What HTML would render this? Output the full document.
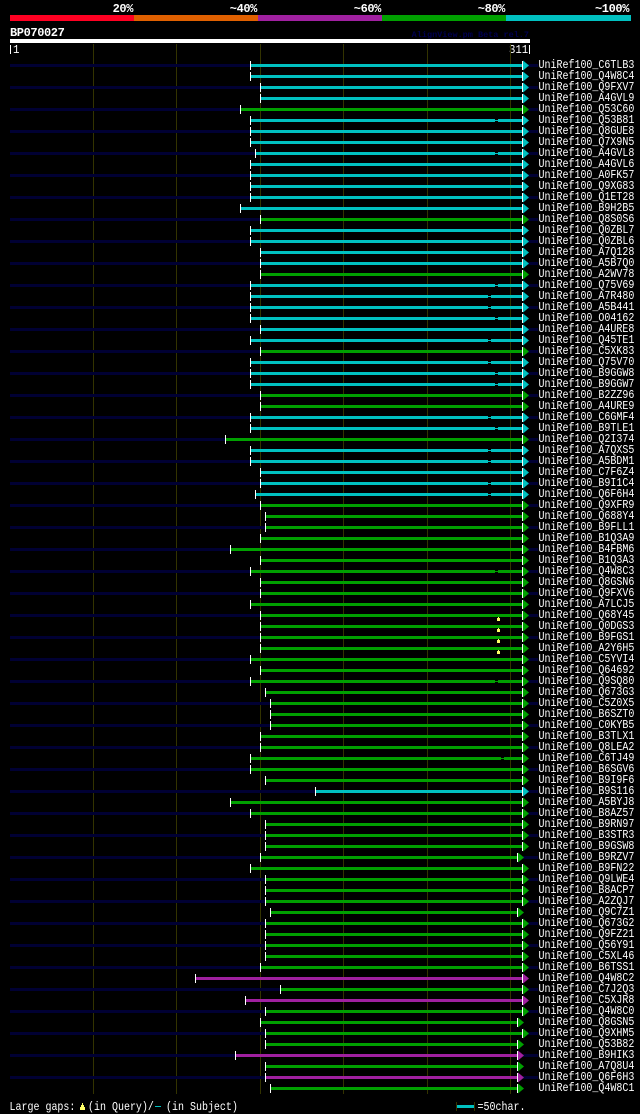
<!DOCTYPE html>
<html><head><meta charset="utf-8"><title>BP070027</title>
<style>
html,body{margin:0;padding:0;background:#000;width:640px;height:1114px;overflow:hidden}
svg{display:block}
text{fill:#fff;font-family:"Liberation Mono",monospace;font-size:12px}
.rows text{transform:translate(538.5px,0) scaleX(.833)}
.c{fill:#00c0c0}.g{fill:#00a000}.p{fill:#a020a0}
.h{font-weight:bold;letter-spacing:-.4px}
</style></head><body>
<svg xmlns="http://www.w3.org/2000/svg" width="640" height="1114" viewBox="0 0 640 1114">
<defs>
<g id="e"><path d="M523-3.5l6 5-6 5z"/><path fill="#fff" d="M522-3h1v9h-1z"/></g>
<g id="f"><path fill="#000" d="M517 0h6v3h-6z"/><path d="M518-3.5l6 5-6 5z"/><path fill="#fff" d="M517-3h1v9h-1z"/></g>
<path id="m" fill="#000033" d="M523 0h5v3h-5z"/>
<path id="g495" fill="#000" d="M495 0h3v1h-3zm0 2h3v1h-3z"/>
<path id="g488" fill="#000" d="M488 0h3v1h-3zm0 2h3v1h-3z"/>
<path id="g502" fill="#000" d="M501 0h3v1h-3zm0 2h3v1h-3z"/>
<path id="y" fill="#ffff66" d="M498 3h1v1h-1zM497 4h3v3h-3z"/>
<g id="b195"><path d="M196 0H522v3H196z"/><path fill="#fff" d="M195-3h1v9h-1z"/></g>
<g id="b225"><path d="M226 0H522v3H226z"/><path fill="#fff" d="M225-3h1v9h-1z"/></g>
<g id="b230"><path d="M231 0H522v3H231z"/><path fill="#fff" d="M230-3h1v9h-1z"/></g>
<g id="b235"><path d="M236 0H522v3H236z"/><path fill="#fff" d="M235-3h1v9h-1z"/></g>
<g id="b240"><path d="M241 0H522v3H241z"/><path fill="#fff" d="M240-3h1v9h-1z"/></g>
<g id="b245"><path d="M246 0H522v3H246z"/><path fill="#fff" d="M245-3h1v9h-1z"/></g>
<g id="b250"><path d="M251 0H522v3H251z"/><path fill="#fff" d="M250-3h1v9h-1z"/></g>
<g id="b255"><path d="M256 0H522v3H256z"/><path fill="#fff" d="M255-3h1v9h-1z"/></g>
<g id="b260"><path d="M261 0H522v3H261z"/><path fill="#fff" d="M260-3h1v9h-1z"/></g>
<g id="b265"><path d="M266 0H522v3H266z"/><path fill="#fff" d="M265-3h1v9h-1z"/></g>
<g id="b270"><path d="M271 0H522v3H271z"/><path fill="#fff" d="M270-3h1v9h-1z"/></g>
<g id="b280"><path d="M281 0H522v3H281z"/><path fill="#fff" d="M280-3h1v9h-1z"/></g>
<g id="b315"><path d="M316 0H522v3H316z"/><path fill="#fff" d="M315-3h1v9h-1z"/></g>
<path id="n225" fill="#000033" d="M10 0H225v3H10zM528 0h10v3h-10z"/>
<path id="n230" fill="#000033" d="M10 0H230v3H10zM528 0h10v3h-10z"/>
<path id="n235" fill="#000033" d="M10 0H235v3H10zM528 0h10v3h-10z"/>
<path id="n240" fill="#000033" d="M10 0H240v3H10zM528 0h10v3h-10z"/>
<path id="n250" fill="#000033" d="M10 0H250v3H10zM528 0h10v3h-10z"/>
<path id="n255" fill="#000033" d="M10 0H255v3H10zM528 0h10v3h-10z"/>
<path id="n260" fill="#000033" d="M10 0H260v3H10zM528 0h10v3h-10z"/>
<path id="n265" fill="#000033" d="M10 0H265v3H10zM528 0h10v3h-10z"/>
<path id="n270" fill="#000033" d="M10 0H270v3H10zM528 0h10v3h-10z"/>
<path id="n280" fill="#000033" d="M10 0H280v3H10zM528 0h10v3h-10z"/>
<path id="n315" fill="#000033" d="M10 0H315v3H10zM528 0h10v3h-10z"/>
</defs>

<!-- header -->
<text class="h" x="133" y="12" text-anchor="end">20%</text>
<text class="h" x="257" y="12" text-anchor="end">~40%</text>
<text class="h" x="381" y="12" text-anchor="end">~60%</text>
<text class="h" x="505" y="12" text-anchor="end">~80%</text>
<text class="h" x="629" y="12" text-anchor="end">~100%</text>
<path fill="#ff0022" d="M10 15h124v6H10z"/>
<path fill="#e06000" d="M134 15h124v6H134z"/>
<path fill="#a020a0" d="M258 15h124v6H258z"/>
<path fill="#00a000" d="M382 15h124v6H382z"/>
<path fill="#00c0c0" d="M506 15h125v6H506z"/>
<text class="h" x="10" y="36">BP070027</text>
<text x="529" y="37" text-anchor="end" style="fill:#000050;font-size:8.5px;font-weight:bold">AlignView.pm Beta rel.7</text>
<path fill="#fff" d="M10 39h520v4H10z"/>
<path fill="#fff" d="M10 45h1v9h-1zM529 45h1v9h-1z"/>
<text transform="translate(13 53) scale(.9 1)">1</text>
<text transform="translate(509 53) scale(.889 1)">311</text>

<!-- grid -->
<path fill="#333300" d="M93 44h1v1050h-1zM176 44h1v1050h-1zM260 44h1v1050h-1zM343 44h1v1050h-1zM427 44h1v1050h-1zM510 44h1v1050h-1z"/>

<g class="rows">
<g class="c" transform="translate(0,64)"><use href="#n250"/><use href="#b250"/><use href="#e"/><text y="4">UniRef100_C6TLB3</text></g>
<g class="c" transform="translate(0,75)"><use href="#b250"/><use href="#e"/><text y="4">UniRef100_Q4W8C4</text></g>
<g class="c" transform="translate(0,86)"><use href="#n260"/><use href="#b260"/><use href="#e"/><text y="4">UniRef100_Q9FXV7</text></g>
<g class="c" transform="translate(0,97)"><use href="#b260"/><use href="#e"/><text y="4">UniRef100_A4GVL9</text></g>
<g class="g" transform="translate(0,108)"><use href="#n240"/><use href="#b240"/><use href="#e"/><text y="4">UniRef100_Q53C60</text></g>
<g class="c" transform="translate(0,119)"><use href="#b250"/><use href="#g495"/><use href="#e"/><text y="4">UniRef100_Q53B81</text></g>
<g class="c" transform="translate(0,130)"><use href="#n250"/><use href="#b250"/><use href="#e"/><text y="4">UniRef100_Q8GUE8</text></g>
<g class="c" transform="translate(0,141)"><use href="#b250"/><use href="#e"/><text y="4">UniRef100_Q7X9N5</text></g>
<g class="c" transform="translate(0,152)"><use href="#n255"/><use href="#b255"/><use href="#g495"/><use href="#e"/><text y="4">UniRef100_A4GVL8</text></g>
<g class="c" transform="translate(0,163)"><use href="#b250"/><use href="#e"/><text y="4">UniRef100_A4GVL6</text></g>
<g class="c" transform="translate(0,174)"><use href="#n250"/><use href="#b250"/><use href="#e"/><text y="4">UniRef100_A0FK57</text></g>
<g class="c" transform="translate(0,185)"><use href="#b250"/><use href="#e"/><text y="4">UniRef100_Q9XG83</text></g>
<g class="c" transform="translate(0,196)"><use href="#n250"/><use href="#b250"/><use href="#e"/><text y="4">UniRef100_Q1ET28</text></g>
<g class="c" transform="translate(0,207)"><use href="#b240"/><use href="#e"/><text y="4">UniRef100_B9H2B5</text></g>
<g class="g" transform="translate(0,218)"><use href="#n260"/><use href="#b260"/><use href="#e"/><text y="4">UniRef100_Q8S0S6</text></g>
<g class="c" transform="translate(0,229)"><use href="#b250"/><use href="#e"/><text y="4">UniRef100_Q0ZBL7</text></g>
<g class="c" transform="translate(0,240)"><use href="#n250"/><use href="#b250"/><use href="#e"/><text y="4">UniRef100_Q0ZBL6</text></g>
<g class="c" transform="translate(0,251)"><use href="#b260"/><use href="#e"/><text y="4">UniRef100_A7Q128</text></g>
<g class="c" transform="translate(0,262)"><use href="#n260"/><use href="#b260"/><use href="#e"/><text y="4">UniRef100_A5B7Q0</text></g>
<g class="g" transform="translate(0,273)"><use href="#b260"/><use href="#e"/><text y="4">UniRef100_A2WV78</text></g>
<g class="c" transform="translate(0,284)"><use href="#n250"/><use href="#b250"/><use href="#g495"/><use href="#e"/><text y="4">UniRef100_Q75V69</text></g>
<g class="c" transform="translate(0,295)"><use href="#b250"/><use href="#g488"/><use href="#e"/><text y="4">UniRef100_A7R480</text></g>
<g class="c" transform="translate(0,306)"><use href="#n250"/><use href="#b250"/><use href="#g488"/><use href="#e"/><text y="4">UniRef100_A5B441</text></g>
<g class="c" transform="translate(0,317)"><use href="#b250"/><use href="#g495"/><use href="#e"/><text y="4">UniRef100_O04162</text></g>
<g class="c" transform="translate(0,328)"><use href="#n260"/><use href="#b260"/><use href="#e"/><text y="4">UniRef100_A4URE8</text></g>
<g class="c" transform="translate(0,339)"><use href="#b250"/><use href="#g488"/><use href="#e"/><text y="4">UniRef100_Q45TE1</text></g>
<g class="g" transform="translate(0,350)"><use href="#n260"/><use href="#b260"/><use href="#e"/><text y="4">UniRef100_C5XK83</text></g>
<g class="c" transform="translate(0,361)"><use href="#b250"/><use href="#g488"/><use href="#e"/><text y="4">UniRef100_Q75V70</text></g>
<g class="c" transform="translate(0,372)"><use href="#n250"/><use href="#b250"/><use href="#g495"/><use href="#e"/><text y="4">UniRef100_B9GGW8</text></g>
<g class="c" transform="translate(0,383)"><use href="#b250"/><use href="#g495"/><use href="#e"/><text y="4">UniRef100_B9GGW7</text></g>
<g class="g" transform="translate(0,394)"><use href="#n260"/><use href="#b260"/><use href="#e"/><text y="4">UniRef100_B2ZZ96</text></g>
<g class="g" transform="translate(0,405)"><use href="#b260"/><use href="#e"/><text y="4">UniRef100_A4URE9</text></g>
<g class="c" transform="translate(0,416)"><use href="#n250"/><use href="#b250"/><use href="#g488"/><use href="#e"/><text y="4">UniRef100_C6GMF4</text></g>
<g class="c" transform="translate(0,427)"><use href="#b250"/><use href="#g495"/><use href="#e"/><text y="4">UniRef100_B9TLE1</text></g>
<g class="g" transform="translate(0,438)"><use href="#n225"/><use href="#b225"/><use href="#e"/><text y="4">UniRef100_Q2I374</text></g>
<g class="c" transform="translate(0,449)"><use href="#b250"/><use href="#g488"/><use href="#e"/><text y="4">UniRef100_A7QXS5</text></g>
<g class="c" transform="translate(0,460)"><use href="#n250"/><use href="#b250"/><use href="#g488"/><use href="#e"/><text y="4">UniRef100_A5BDM1</text></g>
<g class="c" transform="translate(0,471)"><use href="#b260"/><use href="#e"/><text y="4">UniRef100_C7F6Z4</text></g>
<g class="c" transform="translate(0,482)"><use href="#n260"/><use href="#b260"/><use href="#g488"/><use href="#e"/><text y="4">UniRef100_B9I1C4</text></g>
<g class="c" transform="translate(0,493)"><use href="#b255"/><use href="#g488"/><use href="#e"/><text y="4">UniRef100_Q6F6H4</text></g>
<g class="g" transform="translate(0,504)"><use href="#n260"/><use href="#b260"/><use href="#e"/><text y="4">UniRef100_Q9XFR9</text></g>
<g class="g" transform="translate(0,515)"><use href="#b265"/><use href="#e"/><text y="4">UniRef100_Q688Y4</text></g>
<g class="g" transform="translate(0,526)"><use href="#n265"/><use href="#b265"/><use href="#e"/><text y="4">UniRef100_B9FLL1</text></g>
<g class="g" transform="translate(0,537)"><use href="#b260"/><use href="#e"/><text y="4">UniRef100_B1Q3A9</text></g>
<g class="g" transform="translate(0,548)"><use href="#n230"/><use href="#b230"/><use href="#e"/><text y="4">UniRef100_B4FBM6</text></g>
<g class="g" transform="translate(0,559)"><use href="#b260"/><use href="#e"/><text y="4">UniRef100_B1Q3A3</text></g>
<g class="g" transform="translate(0,570)"><use href="#n250"/><use href="#b250"/><use href="#g495"/><use href="#e"/><text y="4">UniRef100_Q4W8C3</text></g>
<g class="g" transform="translate(0,581)"><use href="#b260"/><use href="#e"/><text y="4">UniRef100_Q8GSN6</text></g>
<g class="g" transform="translate(0,592)"><use href="#n260"/><use href="#b260"/><use href="#e"/><text y="4">UniRef100_Q9FXV6</text></g>
<g class="g" transform="translate(0,603)"><use href="#b250"/><use href="#e"/><text y="4">UniRef100_A7LCJ5</text></g>
<g class="g" transform="translate(0,614)"><use href="#n260"/><use href="#b260"/><use href="#y"/><use href="#e"/><text y="4">UniRef100_Q68Y45</text></g>
<g class="g" transform="translate(0,625)"><use href="#b260"/><use href="#y"/><use href="#e"/><text y="4">UniRef100_Q0DGS3</text></g>
<g class="g" transform="translate(0,636)"><use href="#n260"/><use href="#b260"/><use href="#y"/><use href="#e"/><text y="4">UniRef100_B9FGS1</text></g>
<g class="g" transform="translate(0,647)"><use href="#b260"/><use href="#y"/><use href="#e"/><text y="4">UniRef100_A2Y6H5</text></g>
<g class="g" transform="translate(0,658)"><use href="#n250"/><use href="#b250"/><use href="#e"/><text y="4">UniRef100_C5YVI4</text></g>
<g class="g" transform="translate(0,669)"><use href="#b260"/><use href="#e"/><text y="4">UniRef100_Q64692</text></g>
<g class="g" transform="translate(0,680)"><use href="#n250"/><use href="#b250"/><use href="#g495"/><use href="#e"/><text y="4">UniRef100_Q9SQ80</text></g>
<g class="g" transform="translate(0,691)"><use href="#b265"/><use href="#e"/><text y="4">UniRef100_Q673G3</text></g>
<g class="g" transform="translate(0,702)"><use href="#n270"/><use href="#b270"/><use href="#e"/><text y="4">UniRef100_C5Z0X5</text></g>
<g class="g" transform="translate(0,713)"><use href="#b270"/><use href="#e"/><text y="4">UniRef100_B6SZT0</text></g>
<g class="g" transform="translate(0,724)"><use href="#n270"/><use href="#b270"/><use href="#e"/><text y="4">UniRef100_C0KYB5</text></g>
<g class="g" transform="translate(0,735)"><use href="#b260"/><use href="#e"/><text y="4">UniRef100_B3TLX1</text></g>
<g class="g" transform="translate(0,746)"><use href="#n260"/><use href="#b260"/><use href="#e"/><text y="4">UniRef100_Q8LEA2</text></g>
<g class="g" transform="translate(0,757)"><use href="#b250"/><use href="#g502"/><use href="#e"/><text y="4">UniRef100_C6TJ49</text></g>
<g class="g" transform="translate(0,768)"><use href="#n250"/><use href="#b250"/><use href="#e"/><text y="4">UniRef100_B6SGV6</text></g>
<g class="g" transform="translate(0,779)"><use href="#b265"/><use href="#e"/><text y="4">UniRef100_B9I9F6</text></g>
<g class="c" transform="translate(0,790)"><use href="#n315"/><use href="#b315"/><use href="#e"/><text y="4">UniRef100_B9S116</text></g>
<g class="g" transform="translate(0,801)"><use href="#b230"/><use href="#e"/><text y="4">UniRef100_A5BYJ8</text></g>
<g class="g" transform="translate(0,812)"><use href="#n250"/><use href="#b250"/><use href="#e"/><text y="4">UniRef100_B8AZ57</text></g>
<g class="g" transform="translate(0,823)"><use href="#b265"/><use href="#e"/><text y="4">UniRef100_B9RN97</text></g>
<g class="g" transform="translate(0,834)"><use href="#n265"/><use href="#b265"/><use href="#e"/><text y="4">UniRef100_B3STR3</text></g>
<g class="g" transform="translate(0,845)"><use href="#b265"/><use href="#e"/><text y="4">UniRef100_B9GSW8</text></g>
<g class="g" transform="translate(0,856)"><use href="#n260"/><use href="#m"/><use href="#b260"/><use href="#f"/><text y="4">UniRef100_B9RZV7</text></g>
<g class="g" transform="translate(0,867)"><use href="#b250"/><use href="#e"/><text y="4">UniRef100_B9FN22</text></g>
<g class="g" transform="translate(0,878)"><use href="#n265"/><use href="#b265"/><use href="#e"/><text y="4">UniRef100_Q9LWE4</text></g>
<g class="g" transform="translate(0,889)"><use href="#b265"/><use href="#e"/><text y="4">UniRef100_B8ACP7</text></g>
<g class="g" transform="translate(0,900)"><use href="#n265"/><use href="#b265"/><use href="#e"/><text y="4">UniRef100_A2ZQJ7</text></g>
<g class="g" transform="translate(0,911)"><use href="#b270"/><use href="#f"/><text y="4">UniRef100_Q9C7Z1</text></g>
<g class="g" transform="translate(0,922)"><use href="#n265"/><use href="#b265"/><use href="#e"/><text y="4">UniRef100_Q673G2</text></g>
<g class="g" transform="translate(0,933)"><use href="#b265"/><use href="#e"/><text y="4">UniRef100_Q9FZ21</text></g>
<g class="g" transform="translate(0,944)"><use href="#n265"/><use href="#b265"/><use href="#e"/><text y="4">UniRef100_Q56Y91</text></g>
<g class="g" transform="translate(0,955)"><use href="#b265"/><use href="#e"/><text y="4">UniRef100_C5XL46</text></g>
<g class="g" transform="translate(0,966)"><use href="#n260"/><use href="#b260"/><use href="#e"/><text y="4">UniRef100_B6TSS1</text></g>
<g class="p" transform="translate(0,977)"><use href="#b195"/><use href="#e"/><text y="4">UniRef100_Q4W8C2</text></g>
<g class="g" transform="translate(0,988)"><use href="#n280"/><use href="#b280"/><use href="#e"/><text y="4">UniRef100_C7J2Q3</text></g>
<g class="p" transform="translate(0,999)"><use href="#b245"/><use href="#e"/><text y="4">UniRef100_C5XJR8</text></g>
<g class="g" transform="translate(0,1010)"><use href="#n265"/><use href="#b265"/><use href="#e"/><text y="4">UniRef100_Q4W8C0</text></g>
<g class="g" transform="translate(0,1021)"><use href="#b260"/><use href="#f"/><text y="4">UniRef100_Q8GSN5</text></g>
<g class="g" transform="translate(0,1032)"><use href="#n265"/><use href="#b265"/><use href="#e"/><text y="4">UniRef100_Q9XHM5</text></g>
<g class="g" transform="translate(0,1043)"><use href="#b265"/><use href="#f"/><text y="4">UniRef100_Q53B82</text></g>
<g class="p" transform="translate(0,1054)"><use href="#n235"/><use href="#m"/><use href="#b235"/><use href="#f"/><text y="4">UniRef100_B9HIK3</text></g>
<g class="g" transform="translate(0,1065)"><use href="#b265"/><use href="#f"/><text y="4">UniRef100_A7Q8U4</text></g>
<g class="p" transform="translate(0,1076)"><use href="#n265"/><use href="#m"/><use href="#b265"/><use href="#f"/><text y="4">UniRef100_Q6F6H3</text></g>
<g class="g" transform="translate(0,1087)"><use href="#b270"/><use href="#f"/><text y="4">UniRef100_Q4W8C1</text></g>
</g>

<!-- footer -->
<text transform="translate(9.5 1110) scale(.833 1)">Large gaps:</text>
<path fill="#ffff66" d="M82 1103h1v2h-1zM81 1105h3v2h-3zM80 1107h5v3h-5z"/>
<text transform="translate(88 1110) scale(.833 1)">(in Query)/</text>
<path fill="#00c0c0" d="M155 1106h6v1h-6z"/>
<text transform="translate(166 1110) scale(.833 1)">(in Subject)</text>
<path fill="#333300" d="M456 1102h1v9h-1zM474 1102h1v9h-1z"/>
<path fill="#00c0c0" d="M457 1105h17v3h-17z"/>
<text transform="translate(477.5 1110) scale(.833 1)">=50char.</text>
</svg>
</body></html>
